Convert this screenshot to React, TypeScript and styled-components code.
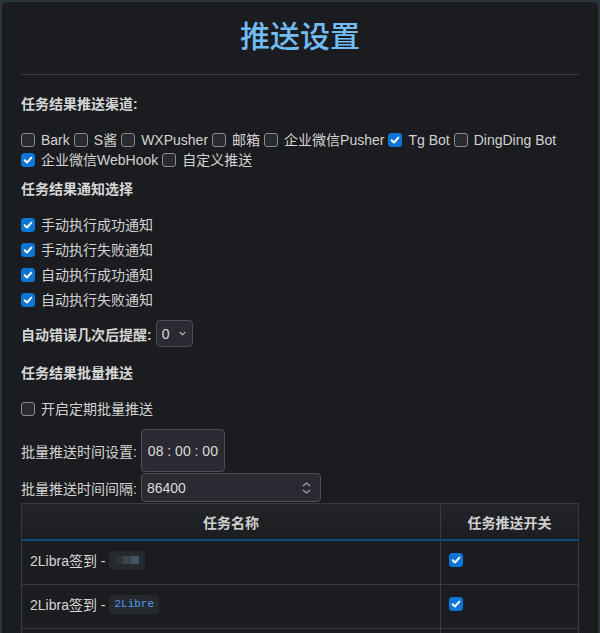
import React from "react";
import styled, { createGlobalStyle } from "styled-components";

const GlobalStyle = createGlobalStyle`
  html, body {
    margin: 0;
    padding: 0;
    height: 100%;
    overflow: hidden;
    background: #283640;
  }
  body {
    font-family: "Liberation Sans", "Noto Sans CJK SC", sans-serif;
    font-size: 14px;
    color: #d3d3d3;
  }
`;

const channels = [
  { name: "Bark", on: false },
  { name: "S酱", on: false },
  { name: "WXPusher", on: false },
  { name: "邮箱", on: false },
  { name: "企业微信Pusher", on: false },
  { name: "Tg Bot", on: true },
  { name: "DingDing Bot", on: false },
  { name: "企业微信WebHook", on: true },
  { name: "自定义推送", on: false },
];

const notifyOptions = ["手动执行成功通知", "手动执行失败通知", "自动执行成功通知", "自动执行失败通知"];

const Modal = styled.div`
  margin: 1px 1px 0;
  min-height: 760px;
  background: #1b1c1f;
  border: 1px solid #33363a;
  border-radius: 6px 6px 0 0;
  padding: 0 19px;
`;

const Header = styled.div`
  padding: 15px 0 17px;
  border-bottom: 1px solid #3a3b3f;
  text-align: center;
`;

const Title = styled.h1`
  margin: 0;
  font-size: 30px;
  line-height: 40px;
  font-weight: 500;
  color: #72bcf4;
`;

const Body = styled.div`
  padding-top: 19px;
`;

const SectionTitle = styled.div`
  font-weight: bold;
  line-height: 20px;
  color: #d6d6d6;
  margin-bottom: 16px;
`;

const ChannelList = styled.div`
  display: flex;
  flex-wrap: wrap;
  column-gap: 4px;
  line-height: 20px;
  margin-bottom: 9px;
`;

const NotifyList = styled.div`
  display: flex;
  flex-direction: column;
  gap: 5px;
  margin-bottom: 10px;
`;

const CheckLabel = styled.label`
  display: inline-flex;
  align-items: center;
  gap: 6px;
  line-height: 20px;
  cursor: pointer;
`;

const Box = styled.span<{ $checked: boolean }>`
  width: 14px;
  height: 14px;
  box-sizing: border-box;
  border-radius: 3px;
  display: inline-flex;
  align-items: center;
  justify-content: center;
  flex: none;
  background: ${(p) => (p.$checked ? "#0b76d6" : "#2a2b30")};
  border: 1px solid ${(p) => (p.$checked ? "#0b76d6" : "#8a8b90")};
`;

const Row = styled.div<{ $mb?: number }>`
  display: flex;
  align-items: center;
  gap: 4px;
  margin-bottom: ${(p) => p.$mb ?? 0}px;
`;

const BoldLabel = styled.span`
  font-weight: bold;
  color: #d6d6d6;
`;

const Select = styled.div`
  width: 37px;
  height: 27px;
  box-sizing: border-box;
  border: 1px solid #4d4d57;
  border-radius: 4px;
  background: #2b2a33;
  display: flex;
  align-items: center;
  justify-content: space-between;
  padding: 0 6px 0 5px;
  color: #dadada;
`;

const TimeBox = styled.div`
  width: 84px;
  height: 43px;
  box-sizing: border-box;
  border: 1px solid #4d4d57;
  border-radius: 4px;
  background: #2b2a33;
  display: flex;
  align-items: center;
  justify-content: center;
  color: #dadada;
  white-space: pre;
`;

const NumberBox = styled.div`
  width: 180px;
  height: 29px;
  box-sizing: border-box;
  border: 1px solid #4d4d57;
  border-radius: 4px;
  background: #2b2a33;
  display: flex;
  align-items: center;
  justify-content: space-between;
  padding: 0 9px 0 5px;
  color: #dadada;
`;

const Table = styled.table`
  width: 100%;
  border-collapse: collapse;
  margin-top: 1px;
`;

const Th = styled.th<{ $w?: number }>`
  height: 35px;
  padding: 0 8px;
  border: 1px solid #393a3e;
  border-bottom: 2px solid #0b4c7e;
  background: linear-gradient(#222428, #1c1d20);
  font-weight: bold;
  color: #cfcfcf;
  text-align: center;
  width: ${(p) => (p.$w ? `${p.$w}px` : "auto")};
`;

const Td = styled.td`
  padding: 0;
  border: 1px solid #393a3e;
  color: #d6d6d6;
  vertical-align: top;
`;

const CellInner = styled.div<{ $pt?: number }>`
  height: ${(p) => 43 + (p.$pt ?? 0)}px;
  box-sizing: border-box;
  padding: ${(p) => p.$pt ?? 0}px 8px 5px;
  display: flex;
  align-items: center;
  gap: 4px;
  white-space: pre;
`;

const Code = styled.code`
  display: inline-flex;
  align-items: center;
  height: 19px;
  padding: 0 5px;
  border-radius: 4px;
  background: #25282d;
  font-family: "Liberation Mono", "DejaVu Sans Mono", monospace;
  font-size: 11px;
  color: #4e9cf0;
`;

const Mosaic = styled.span`
  display: inline-flex;
  align-items: center;
  height: 19px;
  padding: 0 6px 0 8px;
  border-radius: 4px;
  background: #25282d;
`;

const Tile = styled.span<{ $c: string; $w: number }>`
  width: ${(p) => p.$w}px;
  height: 8px;
  background: ${(p) => p.$c};
`;

function Check({ checked }: { checked: boolean }) {
  return (
    <Box $checked={checked}>
      {checked && (
        <svg width="10" height="10" viewBox="0 0 10 10">
          <path d="M1.6 5.2 L4 7.5 L8.4 2.6" fill="none" stroke="#fff" strokeWidth="1.9" strokeLinecap="round" strokeLinejoin="round" />
        </svg>
      )}
    </Box>
  );
}

function CheckItem({ checked, label }: { checked: boolean; label: string }) {
  return (
    <CheckLabel>
      <Check checked={checked} />
      {label}
    </CheckLabel>
  );
}

export default function App() {
  return (
    <>
      <GlobalStyle />
      <Modal>
        <Header>
          <Title>推送设置</Title>
        </Header>
        <Body>
          <SectionTitle>任务结果推送渠道:</SectionTitle>
          <ChannelList>
            {channels.map((c) => (
              <CheckItem key={c.name} checked={c.on} label={c.name} />
            ))}
          </ChannelList>

          <SectionTitle>任务结果通知选择</SectionTitle>
          <NotifyList>
            {notifyOptions.map((n) => (
              <CheckItem key={n} checked label={n} />
            ))}
          </NotifyList>

          <Row $mb={16}>
            <BoldLabel>自动错误几次后提醒:</BoldLabel>
            <Select>
              0
              <svg width="7" height="5" viewBox="0 0 7 5">
                <path d="M0.8 1 L3.5 3.8 L6.2 1" fill="none" stroke="#c4c4c4" strokeWidth="1.1" />
              </svg>
            </Select>
          </Row>

          <SectionTitle>任务结果批量推送</SectionTitle>
          <Row $mb={10}>
            <CheckItem checked={false} label="开启定期批量推送" />
          </Row>

          <Row $mb={1}>
            <span>批量推送时间设置:</span>
            <TimeBox>08 : 00 : 00</TimeBox>
          </Row>
          <Row>
            <span>批量推送时间间隔:</span>
            <NumberBox>
              86400
              <svg width="9" height="12" viewBox="0 0 9 12">
                <path d="M1 4 L4.5 1 L8 4 M1 8 L4.5 11 L8 8" fill="none" stroke="#a8a8a8" strokeWidth="1.1" />
              </svg>
            </NumberBox>
          </Row>

          <Table>
            <thead>
              <tr>
                <Th>任务名称</Th>
                <Th $w={121}>任务推送开关</Th>
              </tr>
            </thead>
            <tbody>
              <tr>
                <Td>
                  <CellInner>
                    2Libra签到 -
                    <Mosaic>
                      <Tile $c="#30343a" $w={6} />
                      <Tile $c="#3a4350" $w={8} />
                      <Tile $c="#445468" $w={8} />
                    </Mosaic>
                  </CellInner>
                </Td>
                <Td>
                  <CellInner>
                    <Check checked />
                  </CellInner>
                </Td>
              </tr>
              <tr>
                <Td>
                  <CellInner>
                    2Libra签到 -<Code>2Libre</Code>
                  </CellInner>
                </Td>
                <Td>
                  <CellInner>
                    <Check checked />
                  </CellInner>
                </Td>
              </tr>
              <tr>
                <Td>
                  <CellInner $pt={30}>
                    2Libra签到 -<Code>2Libre</Code>
                  </CellInner>
                </Td>
                <Td>
                  <CellInner $pt={30}>
                    <Check checked />
                  </CellInner>
                </Td>
              </tr>
            </tbody>
          </Table>
        </Body>
      </Modal>
    </>
  );
}
